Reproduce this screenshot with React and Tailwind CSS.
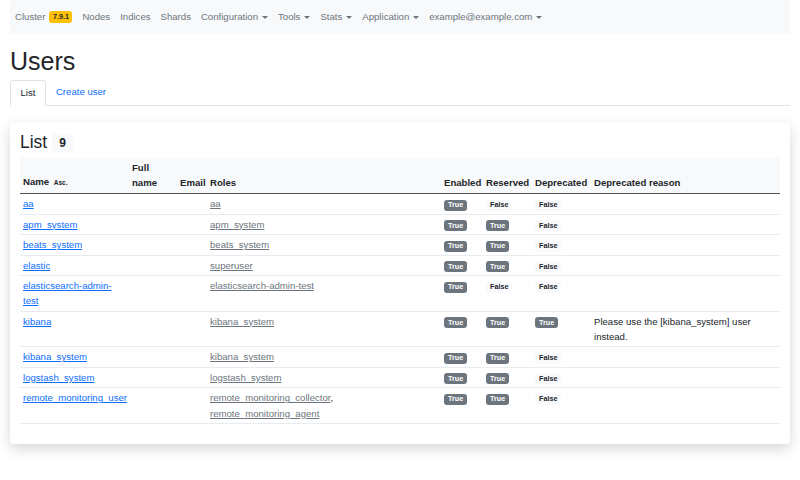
import React from "react";

const navItems = [
  { label: "Nodes" },
  { label: "Indices" },
  { label: "Shards" },
  { label: "Configuration", caret: true },
  { label: "Tools", caret: true },
  { label: "Stats", caret: true },
  { label: "Application", caret: true },
  { label: "example@example.com", caret: true },
];

const users = [
  { name: "aa", roles: ["aa"], enabled: true, reserved: false, deprecated: false },
  { name: "apm_system", roles: ["apm_system"], enabled: true, reserved: true, deprecated: false },
  { name: "beats_system", roles: ["beats_system"], enabled: true, reserved: true, deprecated: false },
  { name: "elastic", roles: ["superuser"], enabled: true, reserved: true, deprecated: false },
  { name: "elasticsearch-admin-test", roles: ["elasticsearch-admin-test"], enabled: true, reserved: false, deprecated: false },
  {
    name: "kibana",
    roles: ["kibana_system"],
    enabled: true,
    reserved: true,
    deprecated: true,
    reason: "Please use the [kibana_system] user instead.",
  },
  { name: "kibana_system", roles: ["kibana_system"], enabled: true, reserved: true, deprecated: false },
  { name: "logstash_system", roles: ["logstash_system"], enabled: true, reserved: true, deprecated: false },
  {
    name: "remote_monitoring_user",
    roles: ["remote_monitoring_collector", "remote_monitoring_agent"],
    enabled: true,
    reserved: true,
    deprecated: false,
  },
];

function Caret() {
  return (
    <span className="ml-[4px] inline-block h-0 w-0 border-x-[3px] border-t-[3.5px] border-x-transparent border-t-[#6c757d] align-middle" />
  );
}

function Bool({ value }) {
  return value ? (
    <span className="inline-block rounded-[3px] bg-[#6c757d] px-[4px] py-[1.5px] text-[7.2px] font-bold leading-[8px] text-white">
      True
    </span>
  ) : (
    <span className="inline-block rounded-[3px] bg-[#f8f9fa] px-[4px] py-[1.5px] text-[7.2px] font-bold leading-[8px] text-[#212529]">
      False
    </span>
  );
}

export default function App() {
  return (
    <div className="h-[480px] w-[800px] overflow-hidden bg-white px-[10px] text-[9.6px] leading-[14.4px] text-[#212529] [font-family:'Liberation_Sans',Arial,sans-serif]">
      {/* Navbar */}
      <nav className="flex h-[34px] items-center bg-[#f8f9fa] px-[5px] text-[#6c757d]">
        <div className="flex items-center">
          <span>Cluster</span>
          <span className="ml-[4px] rounded-[3px] bg-[#ffc107] px-[3.5px] py-[1.5px] text-[7.2px] font-bold leading-[8.5px] text-[#212529]">
            7.9.1
          </span>
        </div>
        {navItems.map((item) => (
          <div key={item.label} className="ml-[10px] flex items-center">
            <span>{item.label}</span>
            {item.caret && <Caret />}
          </div>
        ))}
      </nav>

      <h1 className="mt-[12px] mb-[4px] text-[25px] font-medium leading-[30px]">Users</h1>

      {/* Tabs */}
      <div className="flex border-b border-[#dee2e6]">
        <div className="-mb-px rounded-t-[3px] border border-[#dee2e6] border-b-white bg-white px-[9.5px] py-[5px]">
          List
        </div>
        <div className="px-[10px] py-[5px] text-[#0d6efd]">Create user</div>
      </div>

      {/* Card */}
      <div className="mt-[16px] rounded-[3px] bg-white px-[10px] pt-[10px] pb-[20px] shadow-[0_5px_14px_rgba(0,0,0,0.16)]">
        <h3 className="mb-[5px] flex items-center text-[17.5px] leading-[21px]">
          List
          <span className="ml-[5px] rounded-[3px] bg-[#f8f9fa] px-[7px] py-[3px] text-[12px] font-bold leading-[12px]">
            9
          </span>
        </h3>

        <table className="w-full table-fixed border-collapse text-left">
          <colgroup>
            <col className="w-[109px]" />
            <col className="w-[48px]" />
            <col className="w-[30px]" />
            <col className="w-[234px]" />
            <col className="w-[42px]" />
            <col className="w-[49px]" />
            <col className="w-[59px]" />
            <col />
          </colgroup>
          <thead className="bg-[#f8f9fa]">
            <tr className="border-b border-[#555]">
              <th className="px-[3px] py-[3px] align-bottom font-bold">
                Name <span className="ml-[2px] text-[6.5px]">Asc.</span>
              </th>
              <th className="px-[3px] py-[3px] align-bottom font-bold">Full name</th>
              <th className="px-[3px] py-[3px] align-bottom font-bold">Email</th>
              <th className="px-[3px] py-[3px] align-bottom font-bold">Roles</th>
              <th className="px-[3px] py-[3px] align-bottom font-bold">Enabled</th>
              <th className="px-[3px] py-[3px] align-bottom font-bold">Reserved</th>
              <th className="whitespace-nowrap px-[3px] py-[3px] align-bottom font-bold">Deprecated</th>
              <th className="px-[3px] py-[3px] align-bottom font-bold">Deprecated reason</th>
            </tr>
          </thead>
          <tbody className="leading-[15.25px]">
            {users.map((u) => (
              <tr key={u.name} className="border-b border-[#e9ecef]">
                <td className="px-[3px] py-[2.1px] align-top">
                  <a href="#" className="text-[#0d6efd] underline">
                    {u.name}
                  </a>
                </td>
                <td className="px-[3px] py-[2.1px] align-top"></td>
                <td className="px-[3px] py-[2.1px] align-top"></td>
                <td className="px-[3px] py-[2.1px] align-top">
                  {u.roles.map((r, i) => (
                    <React.Fragment key={r}>
                      <a href="#" className="text-[#6c757d] underline">
                        {r}
                      </a>
                      {i < u.roles.length - 1 && ", "}
                    </React.Fragment>
                  ))}
                </td>
                <td className="px-[3px] py-[2.1px] align-top">
                  <Bool value={u.enabled} />
                </td>
                <td className="px-[3px] py-[2.1px] align-top">
                  <Bool value={u.reserved} />
                </td>
                <td className="px-[3px] py-[2.1px] align-top">
                  <Bool value={u.deprecated} />
                </td>
                <td className="px-[3px] py-[2.1px] align-top">{u.reason}</td>
              </tr>
            ))}
          </tbody>
        </table>
      </div>
    </div>
  );
}
